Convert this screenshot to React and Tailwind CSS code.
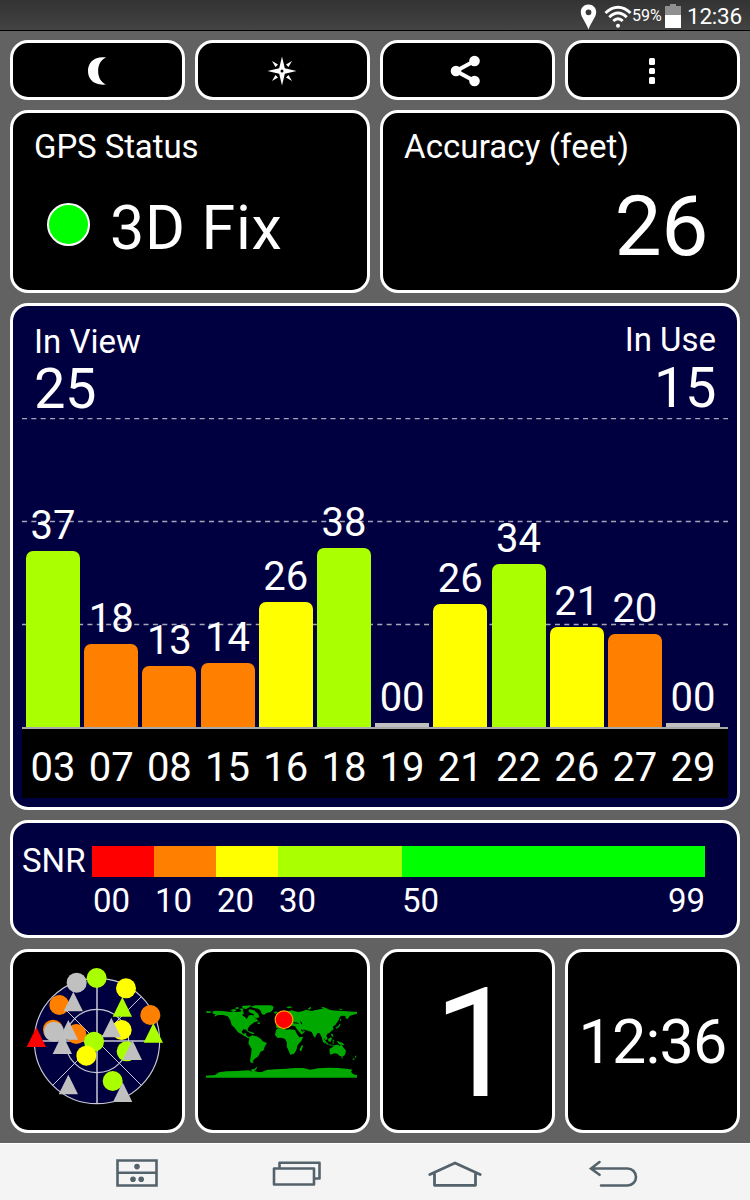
import React from 'react';
import clsx from 'clsx';

const LIME = '#aaff00';
const ORANGE = '#ff8000';
const YELLOW = '#ffff00';
const GRAY = '#c0c0c0';
const RED = '#ff0000';

// Satellites shown in the bar chart. height is the bar height in px
const satellites = [
    { id: '03', snr: '37', height: 176, color: LIME },
    { id: '07', snr: '18', height: 83, color: ORANGE },
    { id: '08', snr: '13', height: 61.5, color: ORANGE },
    { id: '15', snr: '14', height: 64, color: ORANGE },
    { id: '16', snr: '26', height: 125, color: YELLOW },
    { id: '18', snr: '38', height: 179.5, color: LIME },
    { id: '19', snr: '00', height: 4, color: GRAY },
    { id: '21', snr: '26', height: 123.5, color: YELLOW },
    { id: '22', snr: '34', height: 163.5, color: LIME },
    { id: '26', snr: '21', height: 100, color: YELLOW },
    { id: '27', snr: '20', height: 93, color: ORANGE },
    { id: '29', snr: '00', height: 4, color: GRAY },
];

// Sky markers, in drawing order
const markers = [
    { type: 'circle', x: 201, y: 98, color: GRAY },
    { type: 'circle', x: 261, y: 84, color: LIME },
    { type: 'circle', x: 349, y: 115, color: YELLOW },
    { type: 'circle', x: 149, y: 165, color: ORANGE },
    { type: 'triangle', x: 191, y: 155, color: GRAY },
    { type: 'triangle', x: 338, y: 171, color: LIME },
    { type: 'circle', x: 422, y: 195, color: ORANGE },
    { type: 'circle', x: 336, y: 240, color: YELLOW },
    { type: 'triangle', x: 305, y: 233, color: GRAY },
    { type: 'triangle', x: 431, y: 249, color: LIME },
    { type: 'circle', x: 130, y: 239, color: ORANGE },
    { type: 'circle', x: 133, y: 245, color: GRAY },
    { type: 'circle', x: 200, y: 252, color: ORANGE },
    { type: 'triangle', x: 158, y: 283, color: GRAY },
    { type: 'triangle', x: 176, y: 240, color: GRAY },
    { type: 'triangle', x: 80, y: 262, color: RED },
    { type: 'circle', x: 253, y: 275, color: LIME },
    { type: 'circle', x: 230, y: 317, color: YELLOW },
    { type: 'circle', x: 351, y: 304, color: LIME },
    { type: 'triangle', x: 368, y: 301, color: GRAY },
    { type: 'circle', x: 309, y: 393, color: LIME },
    { type: 'triangle', x: 339, y: 427, color: GRAY },
    { type: 'triangle', x: 176, y: 404, color: GRAY },
];

const Card = ({ className, children }) => (
    <div className={clsx('rounded-[18px] border-[3px] border-white', className)}>
        {children}
    </div>
);

const StatusBar = () => (
    <div className="flex h-[31px] items-center justify-end border-b border-black bg-linear-to-b from-[#333333] to-[#434343] pr-[8px]">
        <svg className="mt-[3px] mr-[7px] h-[26px] w-[17px]" viewBox="0 0 17 26">
            <path fillRule="evenodd" fill="#fff" d="M8.500 .500C4 .5.8 3.800.8 8c0 5.500 5 9.500 7.700 17.500C11.200 17.500 16.200 13.500 16.200 8 16.200 3.800 13 .5 8.500.5zM8.500 5.400a2.900 2.900 0 1 1 0 5.800 2.900 2.900 0 0 1 0-5.800z" />
        </svg>
        <svg className="mt-[2px] h-[24px] w-[28px]" viewBox="0 0 28 24" fill="none" stroke="#fff" strokeWidth="2.900">
            <path d="M1.500 9Q7.500 3.200 14 3.200T26.500 9" />
            <path d="M5.300 13.200Q9.500 9 14 9T22.700 13.200" />
            <path d="M9.300 17Q11.500 14.700 14 14.700T18.700 17" />
            <circle cx="14" cy="21.800" r="2" fill="#fff" stroke="none" />
        </svg>
        <span className="mt-[2px] w-[32px] text-[16px] leading-none">59%</span>
        <svg className="mt-px mr-[6px] ml-px h-[24px] w-[16px]" viewBox="0 0 16 24">
            <path d="M5 0h6v2h5v9H0V2h5z" fill="#8f8f8f" />
            <path d="M0 11h16v13H0z" fill="#fff" />
        </svg>
        <span className="mt-[2px] text-[22.500px] leading-none tracking-[-0.2px]">12:36</span>
    </div>
);

const Toolbar = () => (
    <div className="grid h-[60px] grid-cols-4 gap-[10px]">
        <Card className="flex items-center justify-center bg-black pt-[2px]">
            <svg className="mr-[2px] h-[28px] w-[18px]" viewBox="0 0 18 28">
                <path d="M18 .5C4-.8 0 7.500 0 14s4 14.800 18 13.500C7.500 23.500 7.500 4.500 18 .5z" fill="#fff" />
            </svg>
        </Card>
        <Card className="flex items-center justify-center bg-black pt-[2px]">
            <svg className="mr-[1px] h-[30px] w-[30px]" viewBox="0 0 30 30" fill="#fff">
                <path fillRule="evenodd" d="M15 .5L17.800 12.200L29.500 15L17.800 17.800L15 29.500L12.200 17.800L.5 15L12.200 12.200zM15 13.500a1.500 1.500 0 1 0 0 3 1.500 1.500 0 0 0 0-3z" />
                <path d="M5 5l6 3.500-2.500 2.500zM25 5l-3.500 6-2.500-2.500zM5 25l3.500-6 2.500 2.500zM25 25l-6-3.500 2.500-2.500z" />
            </svg>
        </Card>
        <Card className="flex items-center justify-center bg-black pt-[2px]">
            <svg className="mr-[5px] h-[32px] w-[30px]" viewBox="0 0 30 32" fill="#fff">
                <path d="M24.500 6L6 16l18.500 10" fill="none" stroke="#fff" strokeWidth="4" />
                <circle cx="24.500" cy="6" r="5.300" />
                <circle cx="6" cy="16" r="5.300" />
                <circle cx="24.500" cy="26" r="5.300" />
            </svg>
        </Card>
        <Card className="flex flex-col items-center justify-center gap-[3px] bg-black pt-[2px] pr-px">
            <span className="h-[6.500px] w-[6.500px] rounded-[1.500px] bg-white" />
            <span className="h-[6.500px] w-[6.500px] rounded-[1.500px] bg-white" />
            <span className="h-[6.500px] w-[6.500px] rounded-[1.500px] bg-white" />
        </Card>
    </div>
);

const FixPanels = () => (
    <div className="mt-[10px] grid h-[183px] grid-cols-2 gap-[10px]">
        <Card className="bg-black pt-[17px] pl-[21px]">
            <div className="text-[33px] leading-none tracking-[-0.1px]">GPS Status</div>
            <div className="mt-[35px] flex items-start">
                <span className="mt-[5px] ml-[13px] h-[43px] w-[43px] rounded-full border-2 border-white bg-[#00ff00]" />
                <span className="ml-[20px] text-[61px] leading-none tracking-[0.7px]">3D Fix</span>
            </div>
        </Card>
        <Card className="bg-black pt-[17px] pr-[29px] pl-[21px]">
            <div className="text-[33px] leading-none tracking-[0.1px]">Accuracy (feet)</div>
            <div className="mt-[22px] text-right text-[84px] leading-none tracking-[-0.5px]">26</div>
        </Card>
    </div>
);

const SignalChart = () => (
    <Card className="mt-[10px] h-[507px] bg-[#000040] px-[9px]">
        <div className="flex h-[112px] justify-between px-[12px] pt-[19px]">
            <div>
                <div className="text-[33px] leading-none">In View</div>
                <div className="mt-[3px] text-[56px] leading-none tracking-[-0.5px]">25</div>
            </div>
            <div className="-mt-[2px] text-right">
                <div className="text-[33px] leading-none">In Use</div>
                <div className="mt-[4px] text-[56px] leading-none tracking-[-0.5px]">15</div>
            </div>
        </div>

        {/* Bars over the dashed scale */}
        <div className="relative h-[309px]">
            <svg className="absolute inset-0 h-full w-full" stroke="#a6a6ba" strokeWidth="1.500" strokeDasharray="5 4.350">
                <line x1="0" x2="100%" y1="0.500" y2="0.500" />
                <line x1="0" x2="100%" y1="103.500" y2="103.500" />
                <line x1="0" x2="100%" y1="206.500" y2="206.500" />
            </svg>
            <div className="relative flex h-full items-end gap-[4.200px] pl-[4px]">
                {satellites.map((sat) => (
                    <div key={sat.id} className="flex w-[54px] flex-col items-center">
                        <span className="mb-[5px] text-[40px] leading-none">{sat.snr}</span>
                        <div
                            className={clsx('w-full', sat.height > 10 && 'rounded-t-[7px]')}
                            style={{ height: sat.height, backgroundColor: sat.color }}
                        />
                    </div>
                ))}
            </div>
        </div>

        <div className="flex h-[71px] gap-[4.200px] border-t-2 border-[#a8a8a8] bg-black pt-[19px] pl-[4px]">
            {satellites.map((sat) => (
                <span key={sat.id} className="w-[54px] text-center text-[40px] leading-none">{sat.id}</span>
            ))}
        </div>
    </Card>
);

const SnrScale = () => (
    <Card className="mt-[10px] flex h-[118px] bg-[#000040] pt-[23px] pl-[9px] text-[33px] leading-none">
        <span className="-mt-[2px] w-[70px]">SNR</span>
        <div className="w-[613px]">
            <div className="flex h-[31px]">
                <div className="w-[62px] bg-[#ff0000]" />
                <div className="w-[62px] bg-[#ff8000]" />
                <div className="w-[62px] bg-[#ffff00]" />
                <div className="w-[124px] bg-[#aaff00]" />
                <div className="w-[303px] bg-[#00ff00]" />
            </div>
            <div className="mt-[7px] flex pl-px">
                <span className="w-[62px]">00</span>
                <span className="w-[62px]">10</span>
                <span className="w-[62px]">20</span>
                <span className="w-[123px]">30</span>
                <span className="flex flex-1 justify-between">
                    <span>50</span>
                    <span>99</span>
                </span>
            </div>
        </div>
    </Card>
);

const SkyView = () => (
    <svg className="mr-px h-[140px] w-[140px] overflow-visible" viewBox="52 63 420 420">
        <circle cx="262" cy="273" r="188" fill="#000040" />
        <g fill="none" stroke="#c8c8d4" strokeWidth="3.500">
            <circle cx="262" cy="273" r="188" />
            <circle cx="262" cy="273" r="95" />
            <path d="M262 85V461M74 273H450" strokeWidth="4.500" />
            <path d="M129 140L395 406M129 406L395 140" strokeWidth="3" />
        </g>
        {markers.map((m, i) => m.type === 'circle' ? (
            <circle key={i} cx={m.x} cy={m.y} r="30" fill={m.color} />
        ) : (
            <path key={i} d={`M${m.x} ${m.y - 30}l29 59h-58z`} fill={m.color} />
        ))}
    </svg>
);

const WorldMap = () => (
    <svg className="mr-[2px] h-[73px] w-[151px] overflow-visible" viewBox="33 76 453 219" fill="#00a800">
        {/* North America and Greenland */}
        <path d="M33 95h14v5h-12zM52 96L60 93L80 94L100 96L120 97L135 96L145 92L149 100L141 106L150 112L155 119L162 107L172 106L180 114L191 124L178 128L170 134L164 138L158 148L159 157L153 150L145 149L140 156L144 163L152 160L155 168L165 174L160 176L148 169L138 163L128 157L120 146L110 136L106 122L98 110L85 106L70 106L56 111L62 104L54 102z" />
        <path d="M106 91l12-3 7 5-10 4zM119 85l9-3 5 4-8 3zM133 88l8-2 6 5-7 3zM141 79l27-2-3 5-12 6-10-2zM163 89l14 3 13 11 3 10-9 3-10-6 3-6-10-4-7-5z" />
        <path d="M166 81L182 77L228 77L236 81L233 91L227 97L215 100L207 106L200 102L197 93L190 87L177 85zM237 96l9 0 2 4-9 2zM187 129l7-2 1 5-7 1zM158 154l12 3 8 4v2l-8-1-12-6z" />
        {/* South America */}
        <path d="M163 171L172 167L185 170L198 178L203 185L216 190L209 201L206 212L196 217L190 230L182 236L176 240L173 246L177 250L168 249L165 244L168 225L170 208L165 200L160 191L162 181z" />
        {/* Europe and Asia */}
        <path d="M243 132L256 132L258 124L262 112L274 97L290 92L300 95L310 97L325 94L333 90L350 94L362 91L375 89L392 84L400 89L410 92L430 93L450 94L470 96L486 96V102L475 105L465 108L458 118L452 116L451 109L440 108L434 112L431 121L425 130L421 136L413 141L416 148L410 153L404 159L397 162L394 168L398 178L392 182L387 174L387 184L391 193L384 187L380 172L374 161L367 160L360 174L356 170L350 157L340 153L330 151L324 148L330 156L318 166L312 160L303 145L300 139L283 138L280 145L270 140L262 138L256 146L244 146z" />
        <path d="M244 113l5-7 5 9-7 6zM274 82l13-2 6 3-14 3zM339 86l10-5-2 6-6 3zM378 82l12 1-5 4zM430 87l14 1-7 3zM436 115l3 6-4 4zM421 144l8-4 5-8 3 1-4 8-7 6zM408 162l5 1 2 9-5-2z" />
        {/* Africa */}
        <path d="M243 151L250 146L268 144L272 150L285 149L300 151L306 163L313 173L325 171L319 184L308 196L304 212L297 222L286 225L281 214L275 200L276 189L270 178L258 174L248 175L240 166zM314 209l7-14 3 5-5 14-4 0z" />
        {/* South east Asia and Oceania */}
        <path d="M381 172l6 6 9 11 5 5-4 1-8-7-7-11zM399 179l9-7 3 5-5 10-6-2zM413 180l6 1-4 3 2 7-4 1zM398 194l18 2 4 2-18-1zM425 183l8 3 10 4 6 7-10-2-7-1z" />
        <path d="M403 208L412 203L420 196L430 195L434 200L438 193L446 204L453 213L450 225L443 231L434 229L428 223L420 221L405 225zM438 233l6 0-2 4zM480 227l5 4-4 5zM477 235l3 2-6 5-2-2z" />
        {/* Antarctica */}
        <path d="M33 294V288L60 286L72 278L95 275L125 274L160 272L172 276L166 270L178 268L187 260L184 269L178 274L190 277L200 277L215 271L240 269L275 267L300 265L325 265L345 270L370 266L400 264L430 265L455 267L472 270L468 276L474 283L486 287V294z" />
        {/* Inland seas */}
        <path d="M145 89l8 2 3 8-7 6-4-7zM296 127l13 2 4 3-17-1zM303 145l10 12 7 8-4 2zM319 149l8 5-3 2-6-3zM316 123l5 7 1 5-5-4z" fill="#000" />
        <circle cx="267" cy="120" r="26.500" fill="#ff0000" stroke="#ffaa00" strokeWidth="3.500" />
    </svg>
);

const BottomPanels = () => (
    <div className="mt-[11px] grid h-[184px] grid-cols-4 gap-[10px]">
        <Card className="flex items-center justify-center bg-black">
            <SkyView />
        </Card>
        <Card className="flex items-center justify-center bg-black">
            <WorldMap />
        </Card>
        <Card className="flex items-center justify-center bg-black pt-[6px] pl-[17px]">
            <span className="text-[152px] leading-none">1</span>
        </Card>
        <Card className="flex items-center justify-center bg-black pt-[3px]">
            <span className="text-[61px] leading-none tracking-[-0.8px]">12:36</span>
        </Card>
    </div>
);

const NavBar = () => (
    <div className="flex h-[57px] items-center border-t border-white bg-[#f4f4f4] pt-[3px] pl-[116px]">
        <svg className="-mt-px mr-[114px] h-[28px] w-[42px]" viewBox="0 0 42 28" fill="none" stroke="#54626c" strokeWidth="2.600">
            <path d="M1.500 1.500h39v25h-39zM1.500 13.800h39" />
            <g fill="#54626c" stroke="none">
                <circle cx="21" cy="7.600" r="2.800" />
                <circle cx="17" cy="20.300" r="2.800" />
                <circle cx="25.200" cy="20.300" r="2.800" />
            </g>
        </svg>
        <svg className="mr-[107px] h-[25px] w-[49px]" viewBox="0 0 49 25" fill="none" stroke="#54626c" strokeWidth="2.600" strokeLinejoin="round">
            <path d="M2 7.500h40v16H2zM7.500 7.500V1.800h40v15.700H42" />
        </svg>
        <svg className="mr-[107px] h-[26px] w-[54px]" viewBox="0 0 54 26" fill="none" stroke="#54626c" strokeWidth="2.800" strokeLinecap="round" strokeLinejoin="round">
            <path d="M1.800 13.500L27 2l25.200 11.500M6.500 12.500v11.800h41V12.500" />
        </svg>
        <svg className="h-[27px] w-[49px]" viewBox="0 0 49 27" fill="none" stroke="#54626c" strokeWidth="2.600" strokeLinecap="round">
            <path d="M10.500 2L2 8.500l8.500 6.300M2.500 8.500H38.500a8.500 8.500 0 0 1 0 17H12" />
        </svg>
    </div>
);

export default function App() {
    return (
        <div className="flex h-[1200px] w-[750px] flex-col overflow-hidden bg-[#626262] font-['Roboto',sans-serif] text-white">
            <StatusBar />
            <div className="flex-1 px-[10px] pt-[9px]">
                <Toolbar />
                <FixPanels />
                <SignalChart />
                <SnrScale />
                <BottomPanels />
            </div>
            <NavBar />
        </div>
    );
}
